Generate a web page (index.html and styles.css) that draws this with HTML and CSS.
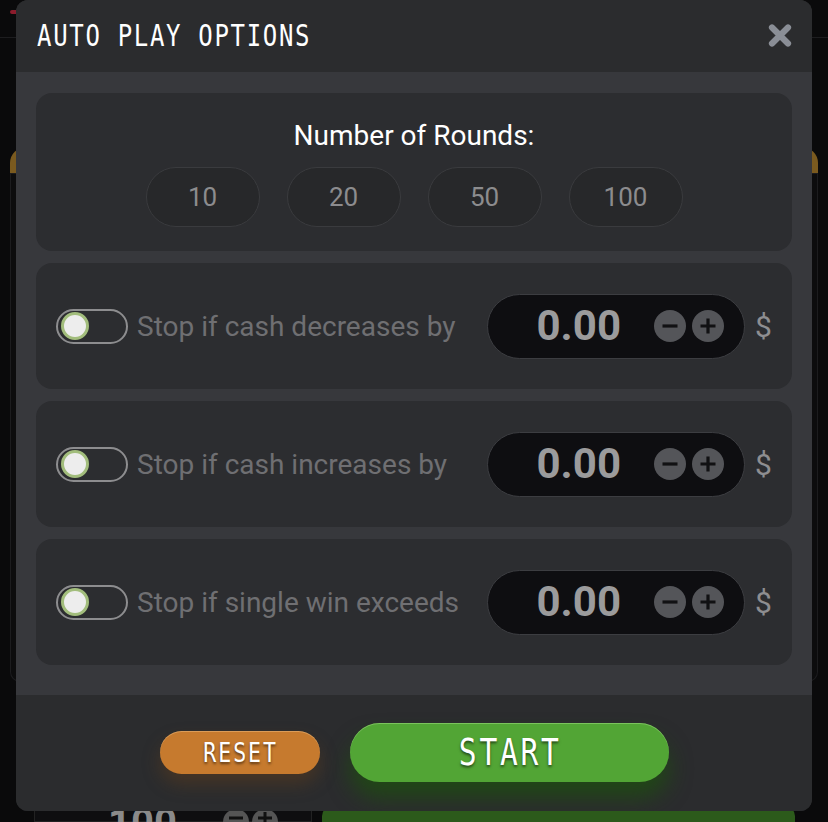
FILE: index.html
```html
<!DOCTYPE html>
<html lang="en">
<head>
<meta charset="utf-8">
<title>Auto Play Options</title>
<link rel="stylesheet" href="styles.css">
</head>
<body>
<div class="game">
  <div class="game-top"><span class="game-mark"></span></div>
  <div class="game-middle">
    <div class="side-panel"></div>
    <div class="side-panel"></div>
  </div>
  <div class="game-bottom">
    <div class="bet-box">
      <span class="bet-val">100</span>
      <svg class="bet-btn" width="56" height="14" viewBox="0 0 56 14"><circle cx="13" cy="14" r="13" fill="#555"/><circle cx="42" cy="14" r="13" fill="#555"/><path d="M6 10 H20 M35 10 H49 M42 4 V14" stroke="#111" stroke-width="3"/></svg>
    </div>
    <div class="bet-go"></div>
  </div>

  <div class="modal">
    <div class="modal-header">
      <h1 class="modal-title"><span class="squeeze">AUTO PLAY OPTIONS</span></h1>
      <button class="close-btn" aria-label="Close">
        <svg width="24" height="23" viewBox="0 0 24 23"><path d="M4 3.5 L20 19.5 M20 3.5 L4 19.5" stroke="#8a8e96" stroke-width="6.2" stroke-linecap="round"/></svg>
      </button>
    </div>
    <div class="modal-body">
      <section class="card rounds-card">
        <div class="rounds-title">Number of Rounds:</div>
        <div class="rounds-list">
          <button class="round-pill">10</button>
          <button class="round-pill">20</button>
          <button class="round-pill">50</button>
          <button class="round-pill">100</button>
        </div>
      </section>
      <section class="card option-row">
        <span class="toggle"><span class="knob"></span></span>
        <span class="option-label">Stop if cash decreases by</span>
        <div class="amount">
          <span class="amount-val">0.00</span>
          <span class="step">
            <svg width="32" height="32" viewBox="0 0 32 32"><circle cx="16" cy="16" r="16" fill="#545559"/><path d="M8.5 16 H23.5" stroke="#111113" stroke-width="3.2"/></svg>
          </span>
          <span class="step">
            <svg width="32" height="32" viewBox="0 0 32 32"><circle cx="16" cy="16" r="16" fill="#545559"/><path d="M8.5 16 H23.5 M16 8.5 V23.5" stroke="#111113" stroke-width="3.2"/></svg>
          </span>
        </div>
        <span class="currency">$</span>
      </section>
      <section class="card option-row">
        <span class="toggle"><span class="knob"></span></span>
        <span class="option-label">Stop if cash increases by</span>
        <div class="amount">
          <span class="amount-val">0.00</span>
          <span class="step">
            <svg width="32" height="32" viewBox="0 0 32 32"><circle cx="16" cy="16" r="16" fill="#545559"/><path d="M8.5 16 H23.5" stroke="#111113" stroke-width="3.2"/></svg>
          </span>
          <span class="step">
            <svg width="32" height="32" viewBox="0 0 32 32"><circle cx="16" cy="16" r="16" fill="#545559"/><path d="M8.5 16 H23.5 M16 8.5 V23.5" stroke="#111113" stroke-width="3.2"/></svg>
          </span>
        </div>
        <span class="currency">$</span>
      </section>
      <section class="card option-row">
        <span class="toggle"><span class="knob"></span></span>
        <span class="option-label">Stop if single win exceeds</span>
        <div class="amount">
          <span class="amount-val">0.00</span>
          <span class="step">
            <svg width="32" height="32" viewBox="0 0 32 32"><circle cx="16" cy="16" r="16" fill="#545559"/><path d="M8.5 16 H23.5" stroke="#111113" stroke-width="3.2"/></svg>
          </span>
          <span class="step">
            <svg width="32" height="32" viewBox="0 0 32 32"><circle cx="16" cy="16" r="16" fill="#545559"/><path d="M8.5 16 H23.5 M16 8.5 V23.5" stroke="#111113" stroke-width="3.2"/></svg>
          </span>
        </div>
        <span class="currency">$</span>
      </section>
    </div>
    <div class="modal-footer">
      <button class="btn btn-reset"><span class="squeeze">RESET</span></button>
      <button class="btn btn-start"><span class="squeeze">START</span></button>
    </div>
  </div>
</div>
</body>
</html>
```

FILE: styles.css
```css
* { box-sizing: border-box; }

html, body {
  margin: 0;
  padding: 0;
  background: #0a0a0b;
}

body {
  width: 828px;
  height: 822px;
  overflow: hidden;
  font-family: Roboto, "Noto Sans", sans-serif;
}

button {
  font: inherit;
  border: none;
  padding: 0;
  margin: 0;
  cursor: pointer;
}

/* ---- background game (mostly hidden) ---- */
.game {
  position: relative;
  width: 828px;
  height: 822px;
  display: flex;
  flex-direction: column;
}

.game-top {
  height: 38px;
  border-bottom: 1px solid #1d1d1f;
  display: flex;
  align-items: center;
  padding-left: 10px;
}

.game-mark {
  width: 14px;
  height: 4px;
  border-radius: 2px;
  background: #8c1c2c;
  margin-top: -14px;
}

.game-middle {
  flex: 1;
  display: flex;
  justify-content: space-between;
  padding: 109px 10px 30px;
}

.side-panel {
  width: 60px;
  border-radius: 16px 16px 10px 10px;
  border-top: 26px solid #7a5a1f;
  background: #0c0c0d;
  box-shadow: inset 0 0 0 1px #1c1c1e;
}

.game-bottom {
  height: 110px;
  display: flex;
  gap: 10px;
  padding: 0 33px 0 34px;
  align-items: flex-end;
}

.bet-box {
  width: 278px;
  height: 22px;
  display: flex;
  align-items: flex-end;
  padding-left: 74px;
  background: #0e0e10;
  border-radius: 10px 10px 0 0;
  box-shadow: inset 0 0 0 1px #222;
  color: #8a8a8a;
  font-size: 40px;
  font-weight: 700;
  line-height: 22px;
  overflow: hidden;
}

.bet-val {
  margin-right: 46px;
  line-height: 40px;
  margin-bottom: -22px;
}

.bet-btn { display: block; }

.bet-go {
  flex: 1;
  height: 16px;
  background: #2c5a1b;
  border-radius: 10px 10px 0 0;
}

/* ---- modal ---- */
.modal {
  position: absolute;
  left: 16px;
  top: 0;
  width: 796px;
  height: 811px;
  border-radius: 12px;
  overflow: hidden;
  display: flex;
  flex-direction: column;
  background: #2b2c2e;
}

.modal-header {
  height: 72px;
  display: flex;
  align-items: center;
  justify-content: space-between;
  padding: 0 20px 0 21px;
  background: #2b2c2e;
}

.squeeze {
  display: inline-block;
  white-space: nowrap;
  transform: scaleX(0.8);
}

.modal-title {
  margin: 0;
  font-family: "DejaVu Sans Mono", monospace;
  font-weight: 400;
  font-size: 30px;
  letter-spacing: 2.1px;
  color: #ffffff;
  line-height: 1;
}

.modal-title .squeeze {
  transform-origin: left center;
}

.close-btn {
  background: transparent;
  width: 24px;
  height: 23px;
  display: flex;
  margin-top: -1px;
}

.modal-body {
  background: #37383c;
  padding: 21px 20px 30px;
  display: flex;
  flex-direction: column;
  gap: 12px;
}

.card {
  background: #2c2d30;
  border-radius: 16px;
}

.rounds-card {
  height: 158px;
  padding-top: 27px;
  display: flex;
  flex-direction: column;
  align-items: center;
}

.rounds-title {
  font-size: 28px;
  line-height: 32px;
  color: #ffffff;
}

.rounds-list {
  margin-top: 15px;
  display: flex;
  gap: 27px;
}

.round-pill {
  width: 114px;
  height: 60px;
  border-radius: 30px;
  background: #27282a;
  border: 1px solid #3a3b3e;
  color: #8c8c8e;
  font-size: 26px;
  display: flex;
  align-items: center;
  justify-content: center;
}

.option-row {
  height: 126px;
  display: flex;
  align-items: center;
  padding: 0 20px;
}

.toggle {
  width: 72px;
  height: 35px;
  border-radius: 18px;
  border: 2px solid #8d8d8f;
  display: flex;
  align-items: center;
  padding-left: 3px;
  flex-shrink: 0;
}

.knob {
  width: 28px;
  height: 28px;
  border-radius: 50%;
  background: #ededed;
  border: 3px solid #a2bd7c;
}

.option-label {
  flex: 1;
  margin-left: 9px;
  font-size: 28px;
  color: #6f6f72;
  white-space: nowrap;
}

.amount {
  width: 258px;
  height: 65px;
  border-radius: 33px;
  background: #0e0e11;
  border: 1px solid #3c3d41;
  display: flex;
  align-items: center;
  justify-content: flex-end;
  padding-right: 20px;
  gap: 6px;
}

.amount-val {
  font-size: 42px;
  font-weight: 700;
  color: #9b9b9c;
  margin-right: 27px;
  line-height: 1;
}

.step {
  display: flex;
  width: 32px;
  height: 32px;
}

.currency {
  margin-left: 10px;
  width: 17px;
  font-size: 30px;
  color: #8e8e90;
}

.modal-footer {
  flex: 1;
  background: #2b2c2e;
  display: flex;
  align-items: center;
  justify-content: center;
  gap: 30px;
  padding-bottom: 2px;
}

.btn {
  font-family: "DejaVu Sans Mono", monospace;
  color: #ffffff;
  border-radius: 40px;
  display: flex;
  align-items: center;
  justify-content: center;
  text-shadow: 0 2px 3px rgba(0, 0, 0, 0.55);
  line-height: 1;
}

.btn-reset {
  width: 160px;
  height: 43px;
  background: #c67a2e;
  font-size: 27px;
  letter-spacing: 2.4px;
  padding-left: 2px;
  box-shadow: inset 0 1px 0 rgba(255, 220, 170, 0.35), 0 10px 18px rgba(120, 70, 20, 0.35);
}

.btn-start {
  width: 319px;
  height: 59px;
  background: #52a535;
  font-size: 37px;
  letter-spacing: 3.4px;
  padding-left: 3px;
  box-shadow: inset 0 1px 0 rgba(200, 255, 170, 0.35), 0 16px 22px rgba(30, 80, 15, 0.75);
}
```
